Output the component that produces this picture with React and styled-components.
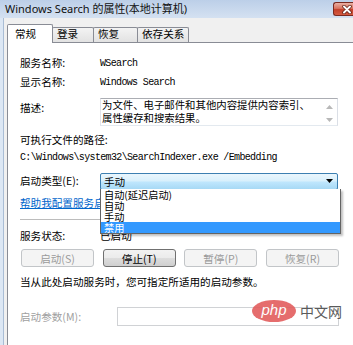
import React from "react";
import styled, { createGlobalStyle } from "styled-components";

const Global = createGlobalStyle`
  html, body { margin: 0; padding: 0; overflow: hidden; background: #f0f0f0; }
  #root { width: 353px; height: 345px; }
`;

const CJK = `"Noto Sans CJK SC", "Noto Sans", sans-serif`;

const Window = styled.div`
  position: relative;
  width: 353px;
  height: 345px;
  display: flex;
  flex-direction: column;
  background: #f0f0f0;
  font-family: ${CJK};
  font-size: 10.6px;
  color: #000;
  overflow: hidden;
`;

const TitleBar = styled.div`
  height: 18px;
  flex: none;
  display: flex;
  align-items: flex-start;
  padding-left: 5px;
  background: linear-gradient(#bccfe8, #d4e1f1);
`;

const Title = styled.span`
  font-family: "Noto Sans", "Noto Sans CJK SC", sans-serif;
  font-size: 11px;
  line-height: 18px;
  color: #111;
  white-space: nowrap;
`;

const CloseBtn = styled.div`
  margin-left: auto;
  margin-top: 2px;
  width: 20px;
  height: 14px;
  box-sizing: border-box;
  padding-left: 6px;
  border: 1px solid #7a2a20;
  border-right: none;
  border-radius: 3px 0 0 3px;
  background: linear-gradient(#eab0a3 0%, #d9735f 45%, #c3402a 55%, #d45a40 100%);
  display: flex;
  align-items: center;
  justify-content: center;
`;

const Body = styled.div`
  flex: 1;
  display: flex;
  min-height: 0;
`;

const LeftFrame = styled.div`
  width: 3px;
  flex: none;
  background: #dce7f4;
  border-right: 1px solid #a9bdd5;
`;

const Client = styled.div`
  flex: 1;
  display: flex;
  flex-direction: column;
  padding: 6px 0 0 3px;
  background: #f0f0f0;
  min-width: 0;
`;

const TabStrip = styled.div`
  height: 18px;
  flex: none;
  display: flex;
  align-items: flex-end;
  position: relative;
  z-index: 1;
`;

const Tab = styled.div`
  box-sizing: border-box;
  width: ${(p) => p.$w}px;
  border: 1px solid #898c95;
  border-bottom: none;
  white-space: nowrap;
  border-radius: 2px 2px 0 0;
  ${(p) =>
    p.$active
      ? `
    height: 19px;
    margin-bottom: -1px;
    background: #fff;
    padding: 2px 0 0 7px;
    line-height: 14px;
  `
      : `
    height: 15px;
    margin-left: -1px;
    background: linear-gradient(#f3f3f3, #e2e2e2);
    padding: 0 0 0 4px;
    line-height: 12px;
  `}
`;

const Panel = styled.div`
  flex: 1;
  position: relative;
  background: #fff;
  border: 1px solid #898c95;
  border-right: none;
  border-bottom: none;
  padding: 10px 14px 0 12px;
  display: flex;
  flex-direction: column;
`;

const Row = styled.div`
  display: grid;
  grid-template-columns: ${(p) => p.$label || 80}px 1fr;
  align-items: ${(p) => p.$align || "center"};
  height: ${(p) => p.$h}px;
  margin-top: ${(p) => p.$mt || 0}px;
  flex: none;
`;

const Line = styled.div`
  height: ${(p) => p.$h}px;
  line-height: ${(p) => p.$h}px;
  margin-top: ${(p) => p.$mt || 0}px;
  white-space: nowrap;
  flex: none;
`;

const Label = styled.span`
  white-space: nowrap;
  color: ${(p) => (p.$disabled ? "#a0a0a0" : "#000")};
  line-height: ${(p) => p.$lh || 18}px;
`;

const Mono = styled.span`
  font-family: "Liberation Mono", monospace;
  font-size: 10px;
  letter-spacing: -0.65px;
  white-space: nowrap;
`;

const TextArea = styled.div`
  box-sizing: border-box;
  width: 238px;
  height: 28px;
  border: 1px solid #abadb3;
  border-color: #abadb3 #dbdfe6 #e3e9ef #e2e3ea;
  display: grid;
  grid-template-columns: 1fr 15px;
`;

const AreaText = styled.div`
  font-size: 10.4px;
  line-height: 12.5px;
  padding-left: 1px;
  white-space: nowrap;
`;

const ScrollCol = styled.div`
  display: flex;
  flex-direction: column;
  justify-content: space-between;
  align-items: center;
  padding: 6px 0 3px;
`;

const Combo = styled.div`
  position: relative;
  box-sizing: border-box;
  width: 238px;
  height: 17px;
  border: 1px solid #3c7fb1;
  border-radius: 2px;
  background: linear-gradient(#eaf6fd 0%, #d9f0fc 45%, #bee6fd 55%, #a7d9f5 100%);
  display: flex;
  align-items: center;
  padding: 0 4px 0 3px;
`;

const ComboText = styled.span`
  flex: 1;
  line-height: 15px;
`;

const DropList = styled.div`
  position: absolute;
  z-index: 5;
  top: 100%;
  left: -1px;
  width: 241px;
  box-sizing: border-box;
  background: #fff;
  border: 1px solid #646464;
  border-top: none;
  box-shadow: 2px 2px 2px rgba(0, 0, 0, 0.25);
`;

const DropItem = styled.div`
  height: 11px;
  line-height: 11px;
  font-size: 10.2px;
  padding-left: 3px;
  white-space: nowrap;
  background: ${(p) => (p.$sel ? "#3399ff" : "transparent")};
  color: ${(p) => (p.$sel ? "#fff" : "#000")};
`;

const Link = styled.span`
  color: #0066cc;
  text-decoration: underline;
`;

const Separator = styled.div`
  height: 1px;
  background: #bcbcbc;
  margin-top: ${(p) => p.$mt}px;
  flex: none;
`;

const ButtonRow = styled.div`
  display: flex;
  justify-content: space-between;
  height: 18px;
  margin: 4px 0 0 1px;
  flex: none;
`;

const Button = styled.div`
  box-sizing: border-box;
  width: 73px;
  height: 18px;
  border-radius: 3px;
  display: flex;
  align-items: center;
  justify-content: center;
  white-space: nowrap;
  border: 1px solid ${(p) => (p.$disabled ? "#c2c5c8" : "#707070")};
  color: ${(p) => (p.$disabled ? "#9a9a9a" : "#000")};
  background: ${(p) =>
    p.$disabled
      ? "#f4f4f4"
      : "linear-gradient(#f2f2f2 0%, #ebebeb 50%, #dddddd 50%, #cfcfcf 100%)"};
`;

const Input = styled.div`
  box-sizing: border-box;
  width: 222px;
  height: 19px;
  border: 1px solid #d0d2d5;
  background: #fff;
`;

const Watermark = styled.div`
  position: absolute;
  left: 252px;
  top: 300px;
  display: flex;
  align-items: center;
  gap: 4px;
  z-index: 6;
  opacity: 0.88;
`;

const PhpBadge = styled.div`
  width: 44px;
  height: 22px;
  border-radius: 50%;
  background: #e25a5a;
  color: #fff;
  font-family: "Liberation Sans", sans-serif;
  font-style: italic;
  font-size: 15px;
  line-height: 20px;
  text-align: center;
`;

const WmText = styled.span`
  font-family: ${CJK};
  font-size: 14px;
  color: #444;
  line-height: 22px;
`;

const UpArrow = () => (
  <svg width="7" height="4" viewBox="0 0 7 4">
    <path d="M0 4 L3.5 0 L7 4 Z" fill="#b8b8b8" />
  </svg>
);
const DownArrow = ({ color = "#b8b8b8" }) => (
  <svg width="7" height="4" viewBox="0 0 7 4">
    <path d="M0 0 L7 0 L3.5 4 Z" fill={color} />
  </svg>
);

export default function App() {
  return (
    <>
      <Global />
      <Window>
        <TitleBar>
          <Title>Windows Search 的属性(本地计算机)</Title>
          <CloseBtn>
            <svg width="10" height="9" viewBox="0 0 10 9">
              <path d="M2 1.5 L8 7.5 M8 1.5 L2 7.5" stroke="#5a1a10" strokeWidth="3.4" strokeLinecap="round" />
              <path d="M2 1.5 L8 7.5 M8 1.5 L2 7.5" stroke="#fff" strokeWidth="2" strokeLinecap="round" />
            </svg>
          </CloseBtn>
        </TitleBar>
        <Body>
          <LeftFrame />
          <Client>
            <TabStrip>
              <Tab $active $w={46}>常规</Tab>
              <Tab $w={42}>登录</Tab>
              <Tab $w={45}>恢复</Tab>
              <Tab $w={52}>依存关系</Tab>
            </TabStrip>
            <Panel>
              <Row $h={20}>
                <Label>服务名称:</Label>
                <Mono>WSearch</Mono>
              </Row>
              <Row $h={18}>
                <Label>显示名称:</Label>
                <Mono>Windows Search</Mono>
              </Row>
              <Row $h={28} $mt={7} $align="start">
                <Label $lh={20}>描述:</Label>
                <TextArea>
                  <AreaText>
                    为文件、电子邮件和其他内容提供内容索引、
                    <br />
                    属性缓存和搜索结果。
                  </AreaText>
                  <ScrollCol>
                    <UpArrow />
                    <DownArrow />
                  </ScrollCol>
                </TextArea>
              </Row>
              <Line $h={18} $mt={5}>可执行文件的路径:</Line>
              <Line $h={14}>
                <Mono>{"C:\\Windows\\system32\\SearchIndexer.exe /Embedding"}</Mono>
              </Line>
              <Row $h={17} $mt={9}>
                <Label>启动类型(E):</Label>
                <Combo>
                  <ComboText>手动</ComboText>
                  <DownArrow color="#000" />
                  <DropList>
                    <DropItem>自动(延迟启动)</DropItem>
                    <DropItem>自动</DropItem>
                    <DropItem>手动</DropItem>
                    <DropItem $sel>禁用</DropItem>
                  </DropList>
                </Combo>
              </Row>
              <Line $h={18} $mt={5}>
                <Link>帮助我配置服务启动选项。</Link>
              </Line>
              <Separator $mt={7} />
              <Row $h={18} $mt={7}>
                <Label>服务状态:</Label>
                <Label>已启动</Label>
              </Row>
              <ButtonRow>
                <Button $disabled>启动(S)</Button>
                <Button>停止(T)</Button>
                <Button $disabled>暂停(P)</Button>
                <Button $disabled>恢复(R)</Button>
              </ButtonRow>
              <Line $h={18} $mt={6}>当从此处启动服务时，您可指定所适用的启动参数。</Line>
              <Row $h={19} $mt={16} $label={97}>
                <Label $disabled>启动参数(M):</Label>
                <Input />
              </Row>
            </Panel>
          </Client>
        </Body>
        <Watermark>
          <PhpBadge>php</PhpBadge>
          <WmText>中文网</WmText>
        </Watermark>
      </Window>
    </>
  );
}
